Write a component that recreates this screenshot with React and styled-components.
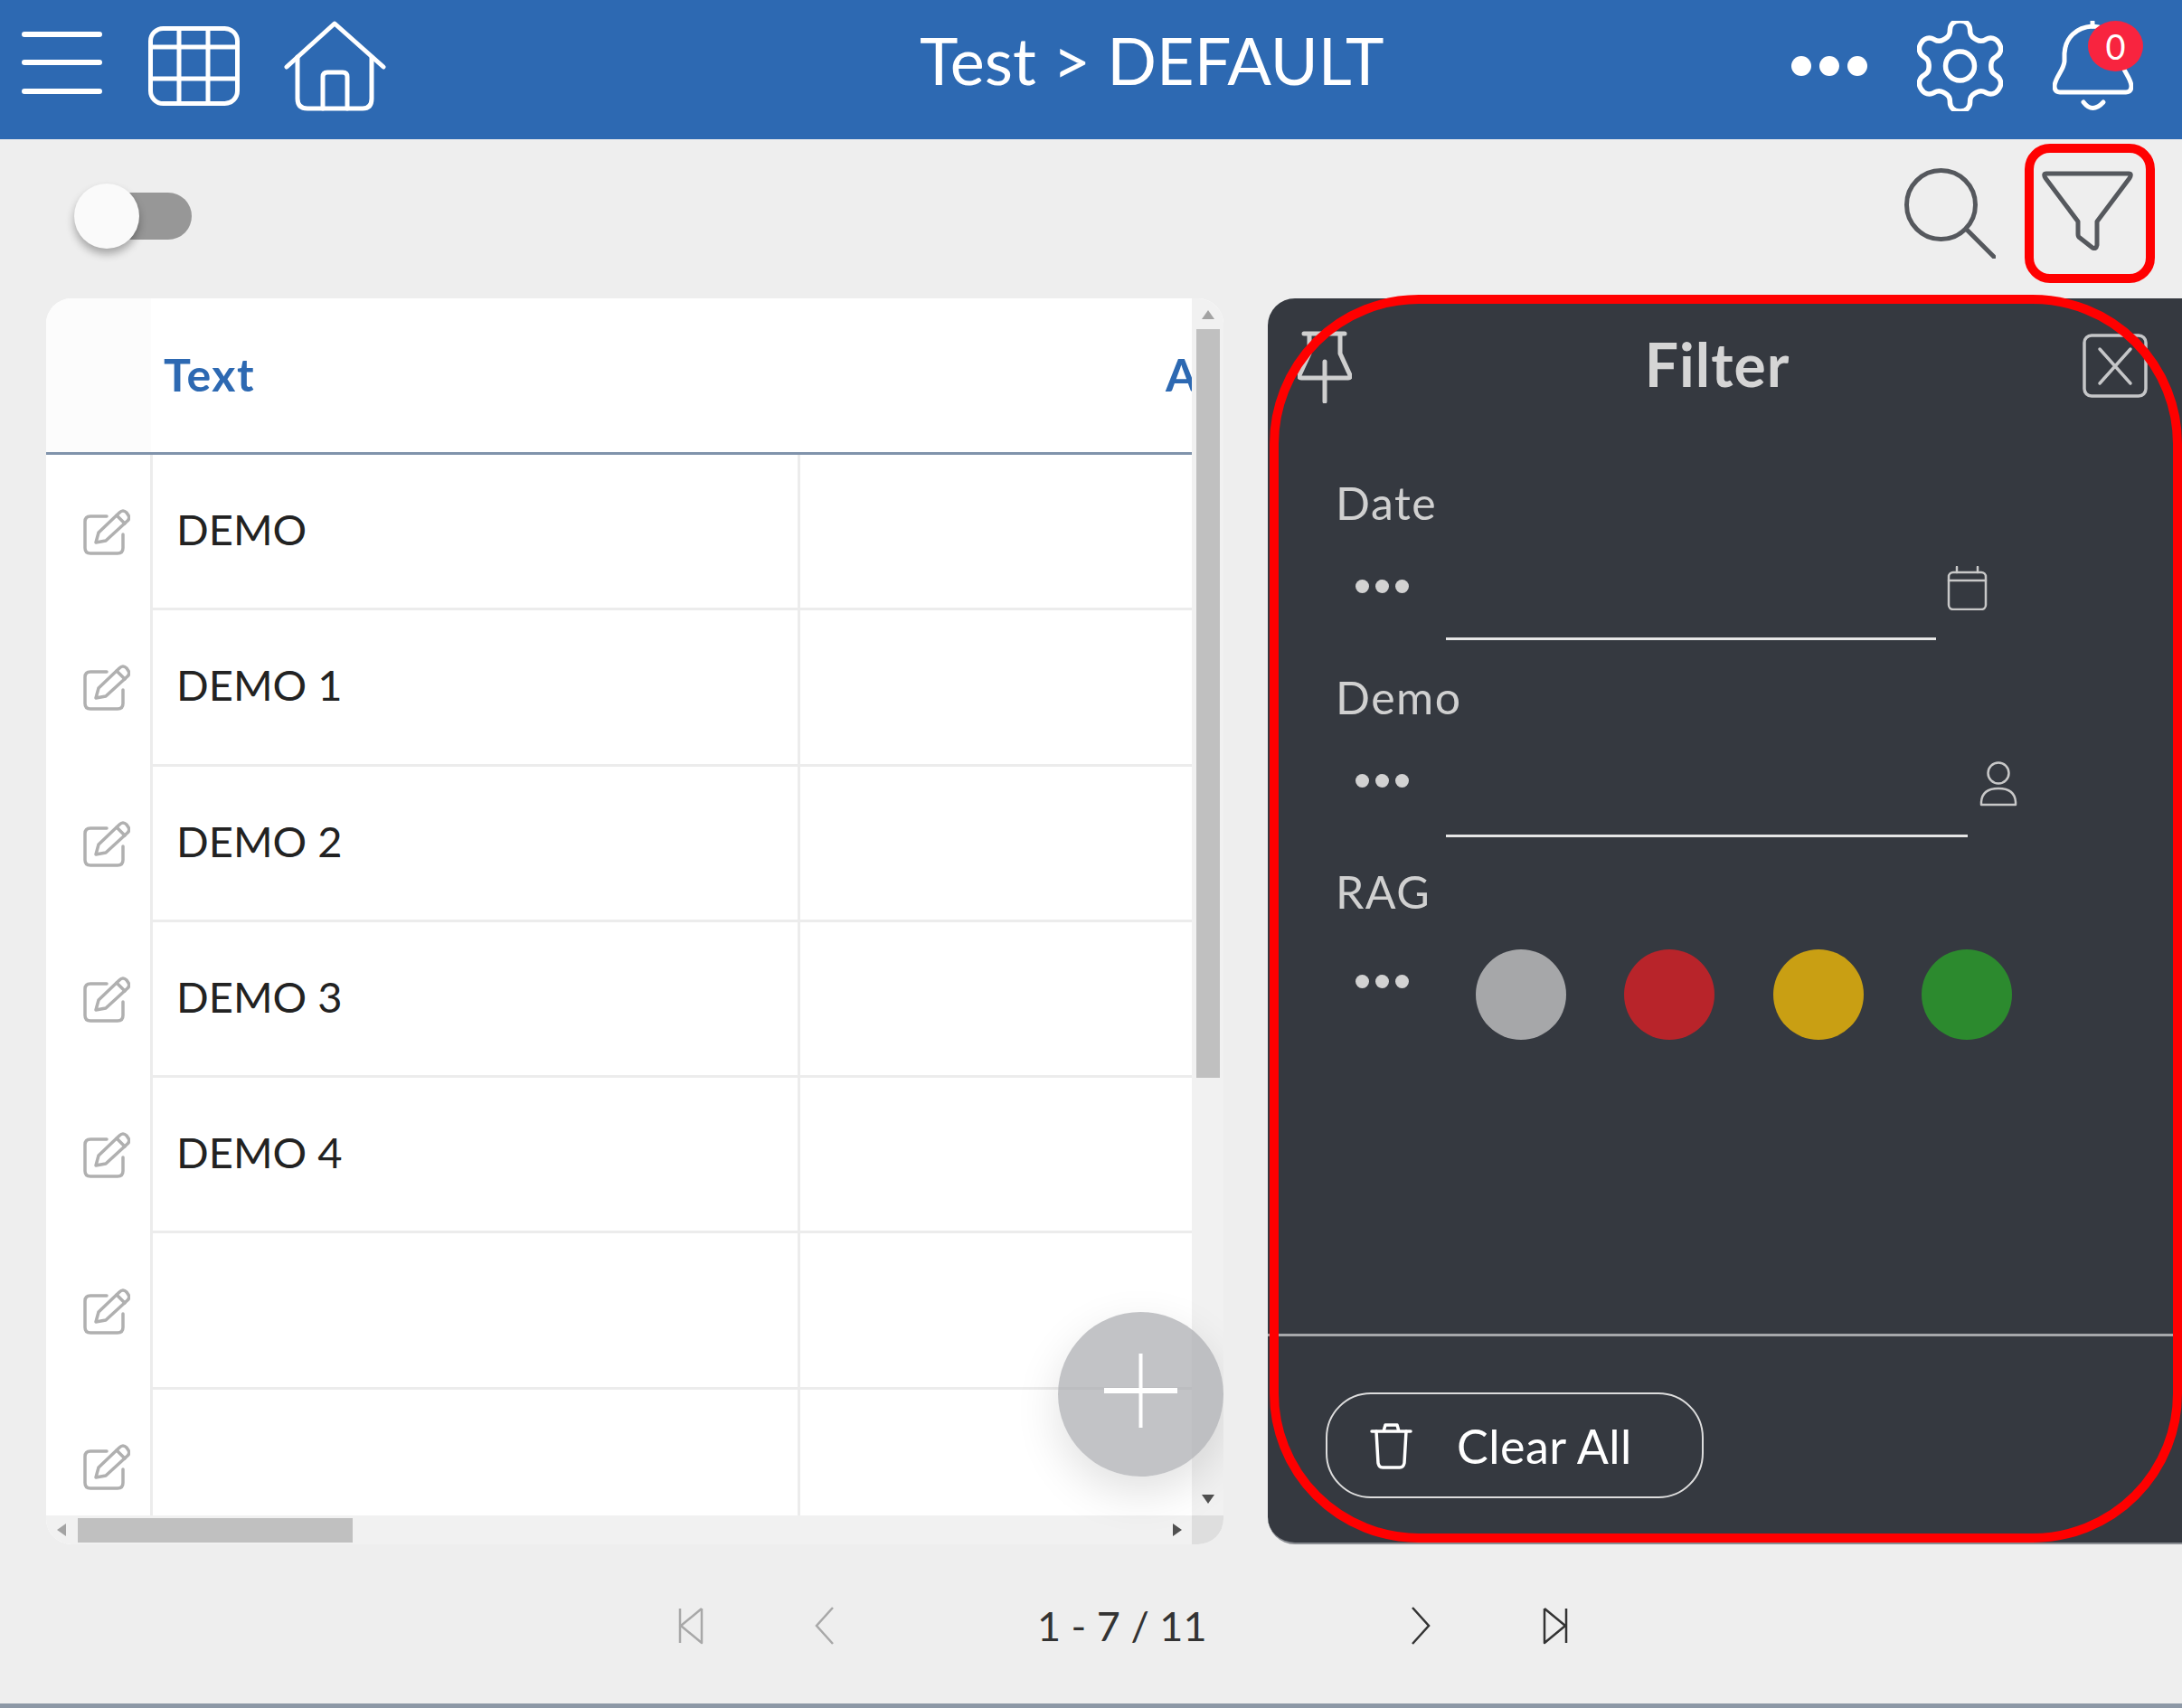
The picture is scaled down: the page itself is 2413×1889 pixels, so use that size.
import React from 'react';
import styled, { createGlobalStyle } from 'styled-components';

const GlobalStyle = createGlobalStyle`
  html, body {
    margin: 0;
    padding: 0;
    background: #eeeeee;
  }

  * {
    box-sizing: border-box;
  }
`;

const Page = styled.div`
  width: 2413px;
  height: 1889px;
  display: flex;
  flex-direction: column;
  overflow: hidden;
  background: #eeeeee;
  font-family: Lato, 'Noto Sans', sans-serif;
`;

const Header = styled.header`
  height: 154px;
  flex: none;
  display: flex;
  background: #2d69b2;
  color: #fff;
`;

const HeaderLeft = styled.div`
  width: 1017px;
  display: flex;
  align-items: flex-start;
  padding: 23px 0 0 24px;
`;

const HamburgerIcon = styled.svg`
  width: 89px;
  height: 69px;
  margin-top: 12px;
`;

const GridIcon = styled.svg`
  width: 101px;
  height: 88px;
  margin: 6px 0 0 51px;
`;

const HomeIcon = styled.svg`
  width: 113px;
  height: 100px;
  margin-left: 49px;
`;

const HeaderTitle = styled.div`
  font-size: 72px;
  line-height: 132px;
  white-space: nowrap;
`;

const HeaderRight = styled.div`
  margin-left: auto;
  display: flex;
  align-items: flex-start;
  padding: 23px 54px 0 0;
`;

const MoreDots = styled.div`
  display: flex;
  gap: ${p => p.$gap}px;
  margin-top: ${p => p.$top}px;
  flex: none;

  > i {
    display: block;
    width: ${p => p.$size}px;
    height: ${p => p.$size}px;
    border-radius: 50%;
    background: ${p => p.$color};
  }
`;

const GearIcon = styled.svg`
  width: 95px;
  height: 100px;
  margin-left: 55px;
`;

const BellWrap = styled.div`
  position: relative;
  width: 89px;
  height: 100px;
  margin-left: 55px;
`;

const Badge = styled.span`
  position: absolute;
  top: 0;
  left: 39px;
  width: 61px;
  height: 56px;
  border-radius: 50%;
  background: #f8243f;
  color: #fff;
  font-size: 38px;
  line-height: 56px;
  text-align: center;
`;

const Toolbar = styled.div`
  height: 176px;
  flex: none;
  display: flex;
  align-items: flex-start;
  justify-content: space-between;
  padding: 5px 30px 0 82px;
`;

const Toggle = styled.div`
  position: relative;
  width: 130px;
  height: 72px;
  margin-top: 44px;
  display: flex;
  align-items: center;
  padding-left: 8px;
`;

const ToggleTrack = styled.div`
  width: 122px;
  height: 52px;
  border-radius: 26px;
  background: #979797;
`;

const ToggleThumb = styled.div`
  position: absolute;
  top: 0;
  left: 0;
  width: 72px;
  height: 72px;
  border-radius: 50%;
  background: #fafafa;
  box-shadow: 0 6px 10px rgba(0, 0, 0, 0.3);
`;

const ToolbarActions = styled.div`
  display: flex;
  align-items: center;
  gap: 32px;
`;

const FilterToggle = styled.div`
  width: 144px;
  height: 154px;
  padding: 20px 6px 0 0;
  border: 10px solid #ff0000;
  border-radius: 28px;
  display: flex;
  align-items: flex-start;
  justify-content: center;
`;

const Main = styled.div`
  height: 1378px;
  flex: none;
  display: flex;
  gap: 49px;
  padding-left: 51px;
`;

const Card = styled.section`
  position: relative;
  width: 1302px;
  flex: none;
  display: flex;
  flex-direction: column;
  border-radius: 28px;
  overflow: hidden;
  background: #fff;
`;

const CardTop = styled.div`
  height: 1346px;
  flex: none;
  display: flex;
`;

const Viewport = styled.div`
  width: 1267px;
  flex: none;
  overflow: hidden;
`;

const HeadRow = styled.div`
  height: 173px;
  display: grid;
  grid-template-columns: 116px 1108px 1fr;
  border-bottom: 3px solid #8093ab;
`;

const HeadCell = styled.div`
  padding-left: 14px;
  background: ${p => (p.$muted ? '#fcfcfc' : '#fff')};
  color: #2d69b2;
  font-size: 50px;
  font-weight: 700;
  letter-spacing: 1.5px;
  line-height: 168px;
  overflow: hidden;
`;

const Row = styled.div`
  height: 172.3px;
  display: grid;
  grid-template-columns: 118px 716px 1fr;
`;

const ActionCell = styled.div`
  display: flex;
  align-items: center;
  padding-left: 41px;
  border-right: 3px solid #ececec;
`;

const EditIcon = styled.svg`
  width: 52px;
  height: 52px;
`;

const DataCell = styled.div`
  padding-left: 26px;
  color: #222;
  font-size: 47px;
  line-height: 165px;
  border-bottom: 3px solid #ececec;
  border-right: ${p => (p.$last ? '0' : '3px solid #ececec')};
`;

const VScroll = styled.div`
  width: 35px;
  flex: none;
  display: flex;
  flex-direction: column;
  align-items: center;
  padding: 13px 0 13px;
  background: #f1f1f1;
`;

const VThumb = styled.div`
  width: 26px;
  height: 828px;
  margin-top: 11px;
  background: #c0c0c0;
`;

const Arrow = styled.span`
  display: block;
  flex: none;
  width: 0;
  height: 0;
  border-style: solid;
  border-color: transparent;
  border-width: ${p => (p.$dir === 'up' || p.$dir === 'down' ? '0 7px' : '7px 0')};
  ${p => p.$dir === 'up' && 'border-bottom: 10px solid #a3a3a3;'}
  ${p => p.$dir === 'down' && 'border-top: 10px solid #505050; margin-top: auto;'}
  ${p => p.$dir === 'left' && 'border-right: 10px solid #a3a3a3;'}
  ${p => p.$dir === 'right' && 'border-left: 10px solid #505050; margin-left: 907px;'}
`;

const HScroll = styled.div`
  flex: 1;
  display: flex;
`;

const HTrack = styled.div`
  width: 1267px;
  flex: none;
  display: flex;
  align-items: center;
  padding-left: 12px;
  background: #f1f1f1;
`;

const HThumb = styled.div`
  width: 304px;
  height: 27px;
  margin-left: 13px;
  background: #c0c0c0;
`;

const ScrollCorner = styled.div`
  flex: 1;
  background: #dedede;
`;

const Fab = styled.button`
  position: absolute;
  right: 0;
  bottom: 75px;
  width: 183px;
  height: 182px;
  padding: 0;
  border: 0;
  border-radius: 50%;
  display: flex;
  align-items: center;
  justify-content: center;
  background: rgba(165, 167, 171, 0.68);
  box-shadow: 0 18px 50px rgba(0, 0, 0, 0.12);
`;

const PlusIcon = styled.svg`
  width: 81px;
  height: 82px;
  margin-bottom: 8px;
`;

const Panel = styled.aside`
  position: relative;
  flex: 1;
  display: flex;
  flex-direction: column;
  border-radius: 30px 0 0 30px;
  border-bottom: 2px solid #8a8d92;
  background: #353940;
  color: #d0d0d0;
`;

const PanelOutline = styled.div`
  position: absolute;
  top: -4px;
  left: 2px;
  right: 0;
  bottom: 0;
  border: 10px solid #ff0000;
  border-radius: 165px;
  pointer-events: none;
`;

const PanelHead = styled.div`
  height: 198px;
  flex: none;
  display: flex;
  align-items: flex-start;
  justify-content: space-between;
  padding: 36px 38px 0 33px;
`;

const PanelTitle = styled.div`
  color: #d5d5d5;
  font-size: 66px;
  font-weight: 700;
  letter-spacing: 1px;
  line-height: 74px;
`;

const CloseIcon = styled.svg`
  width: 72px;
  height: 71px;
  margin-top: 3px;
`;

const Field = styled.div`
  height: 215px;
  flex: none;
  padding-left: 78px;
`;

const FieldLabel = styled.div`
  height: 60px;
  margin: -2px 0 2px -3px;
  font-size: 50px;
  letter-spacing: 1.5px;
  line-height: 60px;
`;

const ControlRow = styled.div`
  display: flex;
  align-items: flex-start;
  padding-left: 19px;
`;

const UnderlineInput = styled.div`
  width: ${p => p.$width}px;
  height: ${p => p.$height}px;
  margin-left: 41px;
  flex: none;
  border-bottom: 3px solid #e6e6e6;
`;

const CalendarIcon = styled.svg`
  width: 45px;
  height: 49px;
  margin: 38px 0 0 12px;
`;

const PersonIcon = styled.svg`
  width: 42px;
  height: 50px;
  margin: 39px 0 0 13px;
`;

const RagRow = styled.div`
  display: flex;
  align-items: flex-start;
  gap: 64.5px;
  margin: 32px 0 0 73.5px;
`;

const RagDot = styled.div`
  width: 100px;
  height: 100px;
  border-radius: 50%;
  background: ${p => p.$color};
`;

const PanelFoot = styled.div`
  margin-top: auto;
  margin-right: 10px;
  height: 231px;
  flex: none;
  padding: 62px 0 0 64px;
  border-top: 3px solid #a6a8ab;
`;

const ClearButton = styled.button`
  width: 418px;
  height: 117px;
  padding: 0 0 0 47px;
  border: 2.5px solid #dddddd;
  border-radius: 50px;
  display: flex;
  align-items: center;
  gap: 49px;
  background: transparent;
  color: #fff;
  font-family: inherit;
  font-size: 52px;
  letter-spacing: 0.5px;
  line-height: 1;
`;

const Pager = styled.nav`
  flex: 1;
  display: flex;
  align-items: center;
  padding: 4px 0 0 750px;
  border-bottom: 5px solid #8d98a6;
`;

const PagerIcon = styled.svg`
  height: 42px;
  width: ${p => p.$width}px;
  flex: none;
  margin-left: ${p => p.$gap || 0}px;
`;

const PagerText = styled.div`
  width: 182px;
  flex: none;
  margin-left: 224px;
  margin-right: 2px;
  color: #333;
  font-size: 45px;
  text-align: center;
  white-space: nowrap;
`;

const rows = ['DEMO', 'DEMO 1', 'DEMO 2', 'DEMO 3', 'DEMO 4', '', '', ''];

const Dots = ({ top }) => (
  <MoreDots $gap={7} $size={15} $color="#d2d2d2" $top={top}>
    <i />
    <i />
    <i />
  </MoreDots>
);

const App = () => {
  return (
    <Page>
      <GlobalStyle />
      <Header>
        <HeaderLeft>
          <HamburgerIcon viewBox="0 0 89 69" fill="none" stroke="#fff" strokeWidth="6" strokeLinecap="round">
            <path d="M3 3H86M3 34H86M3 66H86" />
          </HamburgerIcon>
          <GridIcon viewBox="0 0 101 88" fill="none" stroke="#fff" strokeWidth="5">
            <rect x="2.5" y="2.5" width="96" height="83" rx="14" />
            <path d="M34 3V85M66 3V85M3 23H98M3 58H98" />
          </GridIcon>
          <HomeIcon viewBox="0 0 113 100" fill="none" stroke="#fff" strokeWidth="5" strokeLinecap="round" strokeLinejoin="round">
            <path d="M3 51L56 3L110 51" />
            <path d="M15 40V86Q15 97 26 97H87Q97 97 97 86V40" />
            <path d="M43 97V62Q43 57 48 57H65Q70 57 70 62V97" />
          </HomeIcon>
        </HeaderLeft>
        <HeaderTitle>Test &gt; DEFAULT</HeaderTitle>
        <HeaderRight>
          <MoreDots $gap={9} $size={22} $color="#fff" $top={39}>
            <i />
            <i />
            <i />
          </MoreDots>
          <GearIcon viewBox="2.5 2 19 20" fill="none" stroke="#fff" strokeWidth="1.1" strokeLinecap="round" strokeLinejoin="round">
            <path d="M12.22 2h-.44a2 2 0 0 0-2 2v.18a2 2 0 0 1-1 1.73l-.43.25a2 2 0 0 1-2 0l-.15-.08a2 2 0 0 0-2.73.73l-.22.38a2 2 0 0 0 .73 2.73l.15.1a2 2 0 0 1 1 1.72v.51a2 2 0 0 1-1 1.74l-.15.09a2 2 0 0 0-.73 2.73l.22.38a2 2 0 0 0 2.73.73l.15-.08a2 2 0 0 1 2 0l.43.25a2 2 0 0 1 1 1.73V20a2 2 0 0 0 2 2h.44a2 2 0 0 0 2-2v-.18a2 2 0 0 1 1-1.73l.43-.25a2 2 0 0 1 2 0l.15.08a2 2 0 0 0 2.73-.73l.22-.39a2 2 0 0 0-.73-2.73l-.15-.08a2 2 0 0 1-1-1.74v-.5a2 2 0 0 1 1-1.74l.15-.09a2 2 0 0 0 .73-2.73l-.22-.38a2 2 0 0 0-2.73-.73l-.15.08a2 2 0 0 1-2 0l-.43-.25a2 2 0 0 1-1-1.73V4a2 2 0 0 0-2-2z" />
            <circle cx="12" cy="12" r="3.2" />
          </GearIcon>
          <BellWrap>
            <svg width="89" height="100" viewBox="0 0 89 100" fill="none" stroke="#fff" strokeWidth="5" strokeLinecap="round" strokeLinejoin="round">
              <path d="M44 1V6" />
              <path d="M44 6C26 7 14 19 13 36L13 45C12 55 3 62 2 72Q2 79 8 79H81Q87 79 87 72C86 62 77 55 76 45L76 36C75 19 62 7 44 6Z" />
              <path d="M34 90Q44 103 56 90" />
            </svg>
            <Badge>0</Badge>
          </BellWrap>
        </HeaderRight>
      </Header>

      <Toolbar>
        <Toggle>
          <ToggleTrack />
          <ToggleThumb />
        </Toggle>
        <ToolbarActions>
          <svg width="101" height="100" viewBox="0 0 101 100" fill="none" stroke="#55585d" strokeWidth="5" strokeLinecap="round">
            <circle cx="40.5" cy="40.5" r="38" />
            <path d="M69 68L99 98" />
          </svg>
          <FilterToggle>
            <svg width="101" height="90" viewBox="0 0 101 90" fill="none" stroke="#55585d" strokeWidth="5" strokeLinecap="round" strokeLinejoin="round">
              <path d="M5 3H96Q100 3 97 8L61 56V82Q60 87 56 85L42 74Q40 73 40 70V56L4 8Q1 3 5 3Z" />
            </svg>
          </FilterToggle>
        </ToolbarActions>
      </Toolbar>

      <Main>
        <Card>
          <CardTop>
            <Viewport>
              <HeadRow>
                <HeadCell $muted />
                <HeadCell>Text</HeadCell>
                <HeadCell>A</HeadCell>
              </HeadRow>
              {rows.map((label, i) => (
                <Row key={i}>
                  <ActionCell>
                    <EditIcon viewBox="0 0 52 52" fill="none" stroke="#b0b0b0" strokeWidth="3.5" strokeLinecap="round" strokeLinejoin="round">
                      <path d="M26 8H8Q2 8 2 14V43Q2 49 8 49H38Q44 49 44 43V28" />
                      <path d="M14 37L17 26L40 4Q44 0 48 4L50 7Q52 10 49 13L25 35Z" />
                      <path d="M37 7L46 16" />
                    </EditIcon>
                  </ActionCell>
                  <DataCell>{label}</DataCell>
                  <DataCell $last />
                </Row>
              ))}
            </Viewport>
            <VScroll>
              <Arrow $dir="up" />
              <VThumb />
              <Arrow $dir="down" />
            </VScroll>
          </CardTop>
          <HScroll>
            <HTrack>
              <Arrow $dir="left" />
              <HThumb />
              <Arrow $dir="right" />
            </HTrack>
            <ScrollCorner />
          </HScroll>
          <Fab>
            <PlusIcon viewBox="0 0 81 82" fill="none" stroke="#fff">
              <path d="M0 41H81" strokeWidth="6" />
              <path d="M40.5 0V82" strokeWidth="4" strokeLinecap="round" />
            </PlusIcon>
          </Fab>
        </Card>

        <Panel>
          <PanelHead>
            <svg width="60" height="80" viewBox="0 0 60 80" fill="none" stroke="#cfcfcf" strokeWidth="5" strokeLinecap="round" strokeLinejoin="round">
              <path d="M7 3H52M13 3V25L2 49Q1 52 4 52H56Q59 52 58 49L47 25V3" />
              <path d="M30 34V78" />
            </svg>
            <PanelTitle>Filter</PanelTitle>
            <CloseIcon viewBox="0 0 72 71" fill="none" stroke="#c5c6c8" strokeWidth="3.5" strokeLinecap="round">
              <rect x="2" y="2" width="68" height="67" rx="8" />
              <path d="M19 17L53 55M53 17L19 55" />
            </CloseIcon>
          </PanelHead>

          <Field>
            <FieldLabel>Date</FieldLabel>
            <ControlRow>
              <Dots top={53} />
              <UnderlineInput $width={542} $height={120} />
              <CalendarIcon viewBox="0 0 45 49" fill="none" stroke="#c8c8c8" strokeWidth="2.5" strokeLinecap="round">
                <rect x="2" y="7" width="41" height="41" rx="5" />
                <path d="M2 16H43M11 1V7M34 1V7" />
              </CalendarIcon>
            </ControlRow>
          </Field>

          <Field>
            <FieldLabel>Demo</FieldLabel>
            <ControlRow>
              <Dots top={53} />
              <UnderlineInput $width={577} $height={123} />
              <PersonIcon viewBox="0 0 42 50" fill="none" stroke="#c8c8c8" strokeWidth="2.5" strokeLinejoin="round">
                <ellipse cx="21" cy="13" rx="11.5" ry="11.5" />
                <path d="M2 48V45Q3 30 21 30Q39 30 40 45V48Z" />
              </PersonIcon>
            </ControlRow>
          </Field>

          <Field>
            <FieldLabel>RAG</FieldLabel>
            <ControlRow>
              <Dots top={60} />
              <RagRow>
                <RagDot $color="#a6a7a9" />
                <RagDot $color="#b8242a" />
                <RagDot $color="#c99f13" />
                <RagDot $color="#2c8a2e" />
              </RagRow>
            </ControlRow>
          </Field>

          <PanelFoot>
            <ClearButton>
              <svg width="47" height="52" viewBox="0 0 47 52" fill="none" stroke="#fff" strokeWidth="3.5" strokeLinecap="round" strokeLinejoin="round">
                <path d="M2 10H45M15 10L17 3H30L32 10" />
                <path d="M7 10L9 45Q10 50 14 50H33Q37 50 38 45L40 10" />
              </svg>
              Clear All
            </ClearButton>
          </PanelFoot>
          <PanelOutline />
        </Panel>
      </Main>

      <Pager>
        <PagerIcon $width={28} viewBox="0 0 28 42" fill="none" stroke="#a8a8a8" strokeWidth="2.5" strokeLinejoin="round">
          <path d="M2 2V40M26 2V40L3 21L26 2" />
        </PagerIcon>
        <PagerIcon $width={22} $gap={123} viewBox="0 0 22 42" fill="none" stroke="#a8a8a8" strokeWidth="2.5">
          <path d="M20 1L2 21L20 41" />
        </PagerIcon>
        <PagerText>1 - 7 / 11</PagerText>
        <PagerIcon $width={22} $gap={229} viewBox="0 0 22 42" fill="none" stroke="#333" strokeWidth="2.5">
          <path d="M2 1L20 21L2 41" />
        </PagerIcon>
        <PagerIcon $width={28} $gap={124} viewBox="0 0 28 42" fill="none" stroke="#333" strokeWidth="2.5" strokeLinejoin="round">
          <path d="M26 2V40M2 2V40L25 21L2 2" />
        </PagerIcon>
      </Pager>
    </Page>
  );
};

export default App;
